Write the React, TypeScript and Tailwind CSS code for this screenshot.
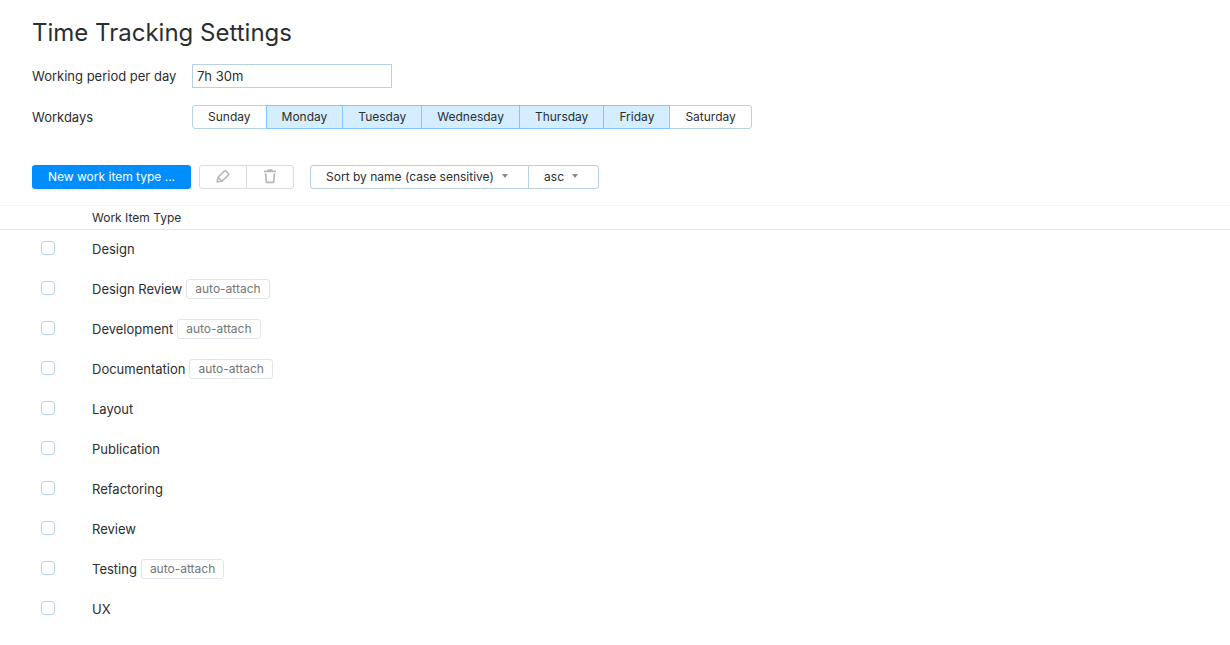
import { useState } from "react";
import clsx from "clsx";

const days = ["Sunday", "Monday", "Tuesday", "Wednesday", "Thursday", "Friday", "Saturday"];

const workItemTypes = [
  { name: "Design", autoAttach: false },
  { name: "Design Review", autoAttach: true },
  { name: "Development", autoAttach: true },
  { name: "Documentation", autoAttach: true },
  { name: "Layout", autoAttach: false },
  { name: "Publication", autoAttach: false },
  { name: "Refactoring", autoAttach: false },
  { name: "Review", autoAttach: false },
  { name: "Testing", autoAttach: true },
  { name: "UX", autoAttach: false },
];

function PencilIcon() {
  return (
    <svg viewBox="0 0 16 16" className="h-4 w-4" fill="none" stroke="currentColor" strokeWidth="1.6" strokeLinejoin="round">
      <path d="M2.2 12.8l.9-4.6 6.2-6.1a1.2 1.2 0 0 1 1.7 0l2.4 2.4a1.2 1.2 0 0 1 0 1.7l-6.4 6z" />
      <path d="M3.1 8.2l3.9 4" />
    </svg>
  );
}

function TrashIcon() {
  return (
    <svg viewBox="0 0 16 16" className="h-4 w-4" fill="none" stroke="currentColor" strokeWidth="1.7">
      <path d="M2 2.4h12M5.5 1.2h5" />
      <path d="M3.5 4.3l.9 9h7.2l.9-9" />
    </svg>
  );
}

function Caret() {
  return (
    <svg viewBox="0 0 6 4" className="pointer-events-none absolute right-[21px] top-[9px] h-1 w-[6px] text-[#8a8a8a]">
      <path d="M0 0h6L3 4z" fill="currentColor" />
    </svg>
  );
}

export default function App() {
  const [period, setPeriod] = useState("7h 30m");
  const [workdays, setWorkdays] = useState(days.slice(1, 6));
  const [selected, setSelected] = useState<string[]>([]);

  const toggle = (list: string[], item: string) =>
    list.includes(item) ? list.filter((i) => i !== item) : [...list, item];

  return (
    <main className="bg-white pb-4 font-['Inter',sans-serif] text-[13px] leading-5 text-[#2b2e31]">
      <div className="px-8 pt-[17px]">
        <h1 className="text-2xl font-normal">Time Tracking Settings</h1>

        <div className="mt-[15px] flex items-center">
          <label htmlFor="period" className="w-40">
            Working period per day
          </label>
          <input
            id="period"
            value={period}
            onChange={(e) => setPeriod(e.target.value)}
            className="h-6 w-[200px] border border-[#b8d1e5] px-1 outline-none focus:border-[#008eff]"
          />
        </div>

        <div className="mt-[17px] flex items-center">
          <span id="workdays" className="w-40">
            Workdays
          </span>
          <div role="group" aria-labelledby="workdays" className="flex text-xs">
            {days.map((day) => {
              const active = workdays.includes(day);
              return (
                <button
                  key={day}
                  aria-pressed={active}
                  onClick={() => setWorkdays(toggle(workdays, day))}
                  className={clsx(
                    "relative -ml-px h-6 border px-[15px] first:ml-0 first:rounded-l-[3px] last:rounded-r-[3px]",
                    active ? "z-10 border-[#80c6ff] bg-[#d4edff]" : "border-[#b8d1e5] bg-white"
                  )}
                >
                  {day}
                </button>
              );
            })}
          </div>
        </div>

        <div className="mt-9 flex items-center text-xs">
          <button className="h-6 rounded-[3px] bg-[#008eff] px-4 text-white">
            New work item type ...
          </button>
          <div className="ml-2 flex text-[#b8b8b8]">
            <button disabled aria-label="Edit" className="flex h-6 w-12 items-center justify-center rounded-l-[3px] border border-[#dbdbdb]">
              <PencilIcon />
            </button>
            <button disabled aria-label="Delete" className="-ml-px flex h-6 w-12 items-center justify-center rounded-r-[3px] border border-[#dbdbdb]">
              <TrashIcon />
            </button>
          </div>
          <div className="ml-4 flex">
            <div className="relative">
              <select aria-label="Sort by" className="h-6 w-[219px] appearance-none rounded-l-[3px] border border-[#b8d1e5] bg-white px-[15px]">
                <option>Sort by name (case sensitive)</option>
                <option>Sort by name (case insensitive)</option>
              </select>
              <Caret />
            </div>
            <div className="relative -ml-px">
              <select aria-label="Sort order" className="h-6 w-[71px] appearance-none rounded-r-[3px] border border-[#b8d1e5] bg-white px-[15px]">
                <option>asc</option>
                <option>desc</option>
              </select>
              <Caret />
            </div>
          </div>
        </div>
      </div>

      <table className="mt-4 w-full border-separate border-spacing-0">
        <thead>
          <tr className="text-left text-xs">
            <th className="w-[92px] border-b border-t border-b-[#dfe5eb] border-t-[#f5f5f5]" />
            <th className="h-[25px] border-b border-t border-b-[#dfe5eb] border-t-[#f5f5f5] p-0 font-normal">
              Work Item Type
            </th>
          </tr>
        </thead>
        <tbody>
          {workItemTypes.map(({ name, autoAttach }) => (
            <tr key={name}>
              <td className="h-10 py-0 pl-[41px] pr-0 align-top">
                <input
                  type="checkbox"
                  aria-label={name}
                  checked={selected.includes(name)}
                  onChange={() => setSelected(toggle(selected, name))}
                  className="mt-[11px] block h-[14px] w-[14px] appearance-none rounded-[3px] border border-[#b8d1e5] bg-white checked:border-[#008eff] checked:bg-[#008eff]"
                />
              </td>
              <td className="h-10 p-0 align-top">
                <div className="mt-[9px] flex items-center gap-1">
                  {name}
                  {autoAttach && (
                    <span className="rounded-[3px] border border-[#dfe5eb] px-2 text-xs leading-[18px] text-[#737577]">
                      auto-attach
                    </span>
                  )}
                </div>
              </td>
            </tr>
          ))}
        </tbody>
      </table>
    </main>
  );
}
